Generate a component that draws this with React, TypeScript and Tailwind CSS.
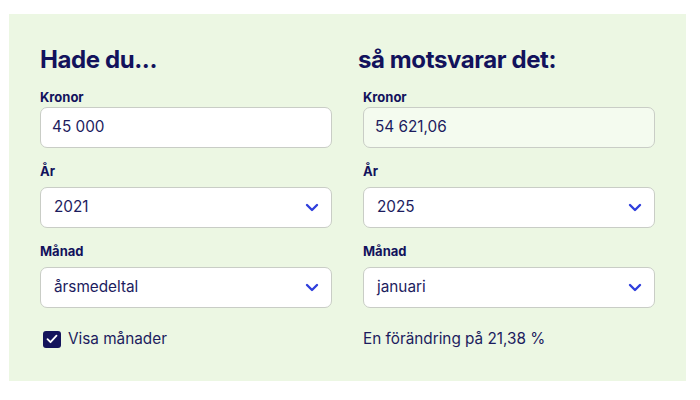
import React from "react";

const navy = "text-[#12125c]";

function Chevron() {
    return (
        <svg width="14" height="9" viewBox="0 0 14 9" fill="none" className="shrink-0">
            <path
                d="M2 2l5 5 5-5"
                stroke="#2f3fdc"
                strokeWidth="2.4"
                strokeLinecap="round"
                strokeLinejoin="round"
            />
        </svg>
    );
}

function Label({ children, tight = false }: { children: React.ReactNode; tight?: boolean }) {
    return (
        <div
            className={`text-[13px] leading-[16px] font-bold ${tight ? "mb-[2px]" : "mb-[8px]"} ${navy}`}
        >
            {children}
        </div>
    );
}

function TextField({ value, filled = false }: { value: string; filled?: boolean }) {
    return (
        <div
            className={`h-[41px] rounded-[7px] border border-[#c9cdc6] px-[11px] flex items-center text-[15.3px] text-[#1c1c5e] ${
                filled ? "bg-[#f4fbef]" : "bg-white"
            }`}
        >
            {value}
        </div>
    );
}

function SelectField({ value }: { value: string }) {
    return (
        <div className="h-[41px] rounded-[7px] border border-[#c9cdc6] bg-white pl-[13px] pr-[12px] flex items-center justify-between text-[15.3px] text-[#1c1c5e]">
            <span>{value}</span>
            <Chevron />
        </div>
    );
}

interface ColumnProps {
    title: string;
    kronor: string;
    year: string;
    month: string;
    filled?: boolean;
    shiftTitle?: boolean;
    footer: React.ReactNode;
}

function Column({ title, kronor, year, month, filled, shiftTitle, footer }: ColumnProps) {
    return (
        <div className="flex flex-col">
            <h2
                className={`text-[24px] leading-[29px] font-bold tracking-[-0.4px] mb-[15px] ${
                    shiftTitle ? "-ml-[5px]" : ""
                } ${navy}`}
            >
                {title}
            </h2>
            <Label tight>Kronor</Label>
            <TextField value={kronor} filled={filled} />
            <div className="mt-[15px]">
                <Label>År</Label>
                <SelectField value={year} />
            </div>
            <div className="mt-[15px]">
                <Label>Månad</Label>
                <SelectField value={month} />
            </div>
            <div className="mt-[19px] h-[24px] flex items-center">{footer}</div>
        </div>
    );
}

export default function App() {
    return (
        <div
            className="w-[700px] h-[400px] bg-white pt-[14px] pl-[9px]"
            style={{ fontFamily: "Inter, 'Liberation Sans', sans-serif" }}
        >
            <div className="w-[677px] h-[367px] bg-[#ecf7e3] p-[31px] grid grid-cols-2 gap-x-[31px]">
                <Column
                    title="Hade du..."
                    kronor="45 000"
                    year="2021"
                    month="årsmedeltal"
                    footer={
                        <label className="ml-[3px] flex items-center gap-[7px] text-[15.3px] text-[#1c1c5e]">
                            <span className="w-[18px] h-[17px] rounded-[3px] bg-[#14145c] flex items-center justify-center">
                                <svg width="12" height="10" viewBox="0 0 12 10" fill="none">
                                    <path
                                        d="M1.5 5.2l3 3 6-6.5"
                                        stroke="white"
                                        strokeWidth="1.8"
                                        strokeLinecap="round"
                                        strokeLinejoin="round"
                                    />
                                </svg>
                            </span>
                            Visa månader
                        </label>
                    }
                />
                <Column
                    title="så motsvarar det:"
                    kronor="54 621,06"
                    year="2025"
                    month="januari"
                    filled
                    shiftTitle
                    footer={
                        <span className="text-[15.3px] text-[#1c1c5e]">En förändring på 21,38 %</span>
                    }
                />
            </div>
        </div>
    );
}
